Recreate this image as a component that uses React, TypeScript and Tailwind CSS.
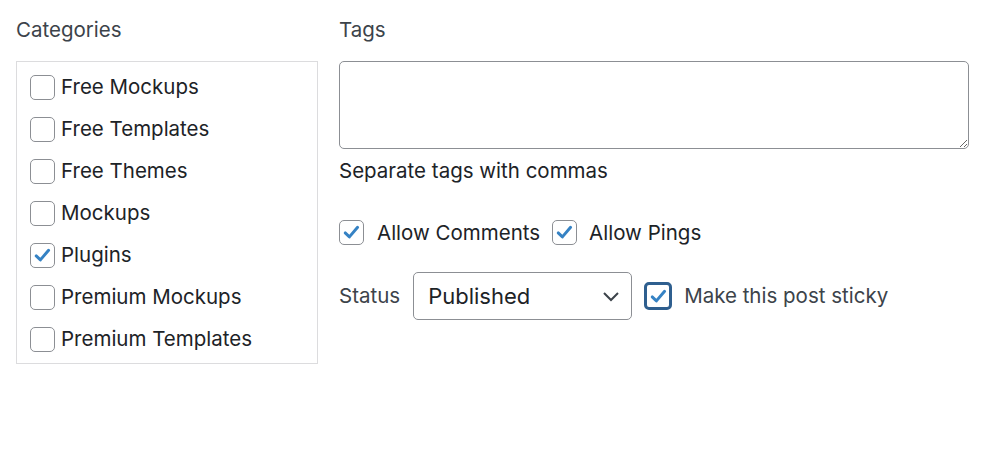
import React from "react";

const Check = ({ checked, focused }: { checked?: boolean; focused?: boolean }) => (
  <span
    className={
      focused
        ? "flex h-[28px] w-[28px] shrink-0 items-center justify-center rounded-[5px] border-[3px] border-[#2f5f8f] bg-white"
        : "flex h-[25px] w-[25px] shrink-0 items-center justify-center rounded-[5px] border border-[#8c8f94] bg-white"
    }
  >
    {checked && (
      <svg viewBox="0 0 20 20" className="h-[21px] w-[21px]">
        <path
          d="M4 10.4 L8 14.2 L15.8 5"
          fill="none"
          stroke="#3582c4"
          strokeWidth="2.8"
          strokeLinecap="round"
          strokeLinejoin="round"
        />
      </svg>
    )}
  </span>
);

const cats = [
  ["Free Mockups", false],
  ["Free Templates", false],
  ["Free Themes", false],
  ["Mockups", false],
  ["Plugins", true],
  ["Premium Mockups", false],
  ["Premium Templates", false],
] as const;

export default function App() {
  return (
    <div
      className="h-[449px] w-[1000px] bg-white text-[#1d2327]"
      style={{ fontFamily: "Inter, 'Noto Sans', sans-serif" }}
    >
      <div className="flex gap-[21px] pl-[16px] pt-[18px]">
        <div className="w-[302px]">
          <div className="h-[43px] text-[20.5px] leading-[24px] text-[#3c434a]">Categories</div>
          <div className="flex flex-col border border-[#dcdcde] pb-[3px] pl-[13px] pt-[4px]">
            {cats.map(([name, c]) => (
              <div key={name} className="flex h-[42px] shrink-0 items-center gap-[6px] text-[20.5px]">
                <Check checked={c} />
                <span>{name}</span>
              </div>
            ))}
          </div>
        </div>
        <div className="w-[630px]">
          <div className="h-[43px] text-[20.5px] leading-[24px] text-[#3c434a]">Tags</div>
          <textarea className="block h-[88px] w-[630px] resize-y rounded-[5px] border border-[#8c8f94] bg-white" />
          <div className="mt-[10px] text-[20.5px] leading-[24px]">Separate tags with commas</div>
          <div className="mt-[37px] flex items-center text-[20.5px] leading-[24px]">
            <Check checked />
            <span className="ml-[13px]">Allow Comments</span>
            <span className="ml-[12px]">
              <Check checked />
            </span>
            <span className="ml-[12px]">Allow Pings</span>
          </div>
          <div className="mt-[27px] flex items-center text-[20.5px]">
            <span className="text-[#3c434a]">Status</span>
            <div className="ml-[13px] flex h-[48px] w-[219px] items-center justify-between rounded-[5px] border border-[#8c8f94] pl-[14px] pr-[10px] text-[22px]">
              <span>Published</span>
              <svg viewBox="0 0 20 20" className="h-[20px] w-[20px]">
                <path d="M3 7 L10 14 L17 7" fill="none" stroke="#3c434a" strokeWidth="2" />
              </svg>
            </div>
            <span className="ml-[12px]">
              <Check checked focused />
            </span>
            <span className="ml-[12px] text-[#3c434a]">Make this post sticky</span>
          </div>
        </div>
      </div>
    </div>
  );
}
